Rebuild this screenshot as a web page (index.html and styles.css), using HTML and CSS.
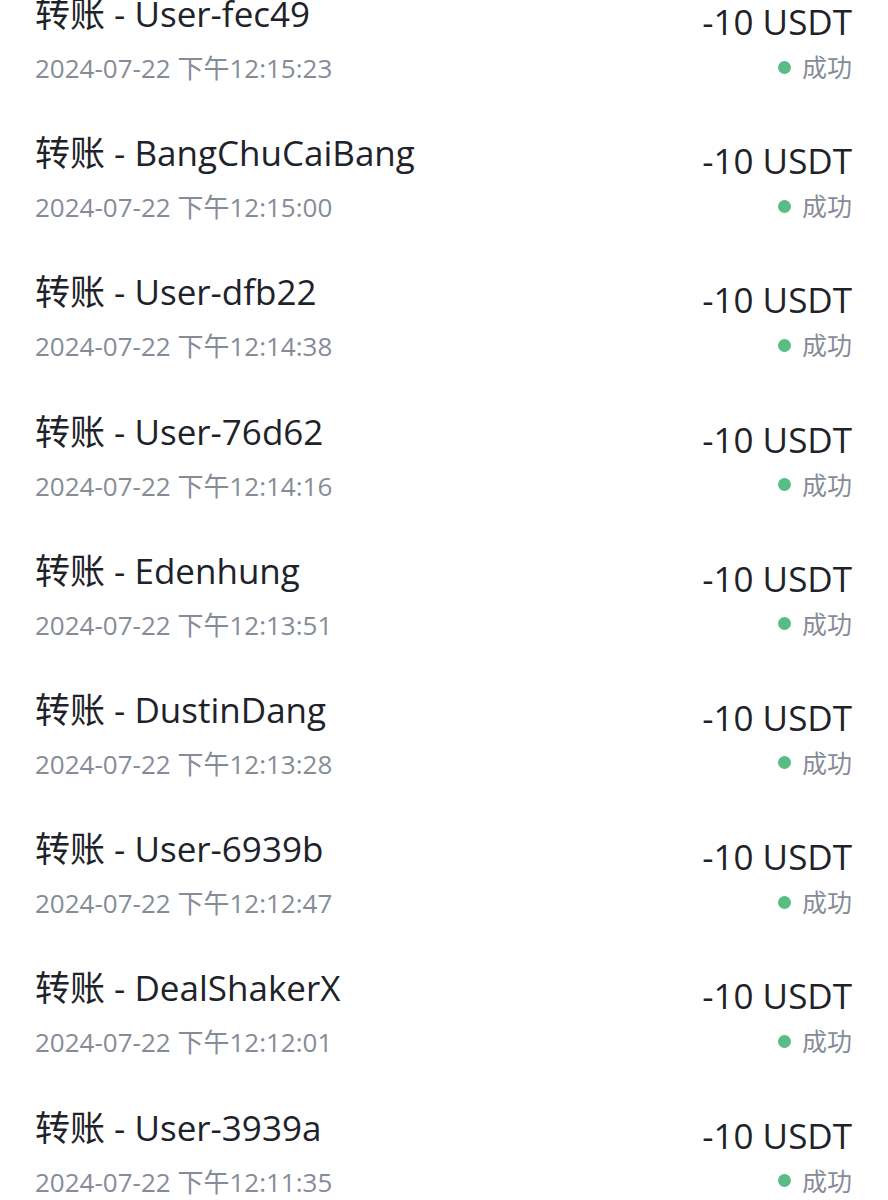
FILE: index.html
```html
<!DOCTYPE html>
<html lang="zh-CN">
<head>
    <meta charset="UTF-8">
    <meta name="viewport" content="width=device-width, initial-scale=1.0">
    <title>资金记录</title>
    <link rel="stylesheet" href="styles.css">
</head>
<body>
    <div class="records">
        <div class="record">
            <div class="info">
                <div class="title">转账 - User-fec49</div>
                <div class="time">2024-07-22 下午12:15:23</div>
            </div>
            <div class="result">
                <div class="amount">-10 USDT</div>
                <div class="status"><span class="dot"></span>成功</div>
            </div>
        </div>
        <div class="record">
            <div class="info">
                <div class="title">转账 - BangChuCaiBang</div>
                <div class="time">2024-07-22 下午12:15:00</div>
            </div>
            <div class="result">
                <div class="amount">-10 USDT</div>
                <div class="status"><span class="dot"></span>成功</div>
            </div>
        </div>
        <div class="record">
            <div class="info">
                <div class="title">转账 - User-dfb22</div>
                <div class="time">2024-07-22 下午12:14:38</div>
            </div>
            <div class="result">
                <div class="amount">-10 USDT</div>
                <div class="status"><span class="dot"></span>成功</div>
            </div>
        </div>
        <div class="record">
            <div class="info">
                <div class="title">转账 - User-76d62</div>
                <div class="time">2024-07-22 下午12:14:16</div>
            </div>
            <div class="result">
                <div class="amount">-10 USDT</div>
                <div class="status"><span class="dot"></span>成功</div>
            </div>
        </div>
        <div class="record">
            <div class="info">
                <div class="title">转账 - Edenhung</div>
                <div class="time">2024-07-22 下午12:13:51</div>
            </div>
            <div class="result">
                <div class="amount">-10 USDT</div>
                <div class="status"><span class="dot"></span>成功</div>
            </div>
        </div>
        <div class="record">
            <div class="info">
                <div class="title">转账 - DustinDang</div>
                <div class="time">2024-07-22 下午12:13:28</div>
            </div>
            <div class="result">
                <div class="amount">-10 USDT</div>
                <div class="status"><span class="dot"></span>成功</div>
            </div>
        </div>
        <div class="record">
            <div class="info">
                <div class="title">转账 - User-6939b</div>
                <div class="time">2024-07-22 下午12:12:47</div>
            </div>
            <div class="result">
                <div class="amount">-10 USDT</div>
                <div class="status"><span class="dot"></span>成功</div>
            </div>
        </div>
        <div class="record">
            <div class="info">
                <div class="title">转账 - DealShakerX</div>
                <div class="time">2024-07-22 下午12:12:01</div>
            </div>
            <div class="result">
                <div class="amount">-10 USDT</div>
                <div class="status"><span class="dot"></span>成功</div>
            </div>
        </div>
        <div class="record">
            <div class="info">
                <div class="title">转账 - User-3939a</div>
                <div class="time">2024-07-22 下午12:11:35</div>
            </div>
            <div class="result">
                <div class="amount">-10 USDT</div>
                <div class="status"><span class="dot"></span>成功</div>
            </div>
        </div>
    </div>
</body>
</html>
```

FILE: styles.css
```css
body {
    font-family: "Open Sans", "Noto Sans CJK SC", sans-serif;
    margin: 0;
    padding: 0;
    background-color: #ffffff;
    color: #1e2329;
}
.records {
    margin-top: -6px;
    padding: 0 36px 0 35px;
}
.record {
    display: flex;
    justify-content: space-between;
    height: 139.2px;
}
.title {
    font-size: 35px;
    line-height: 40px;
}
.time {
    font-size: 26px;
    line-height: 32px;
    margin-top: 18px;
    color: #868c97;
}
.result {
    display: flex;
    flex-direction: column;
    align-items: flex-end;
}
.amount {
    font-size: 35px;
    line-height: 40px;
    margin-top: 8px;
}
.status {
    display: flex;
    align-items: center;
    font-size: 25px;
    line-height: 32px;
    margin-top: 9px;
    color: #868c97;
}
.dot {
    width: 13px;
    height: 13px;
    border-radius: 50%;
    background: #58bd84;
    margin-right: 11px;
}
```
